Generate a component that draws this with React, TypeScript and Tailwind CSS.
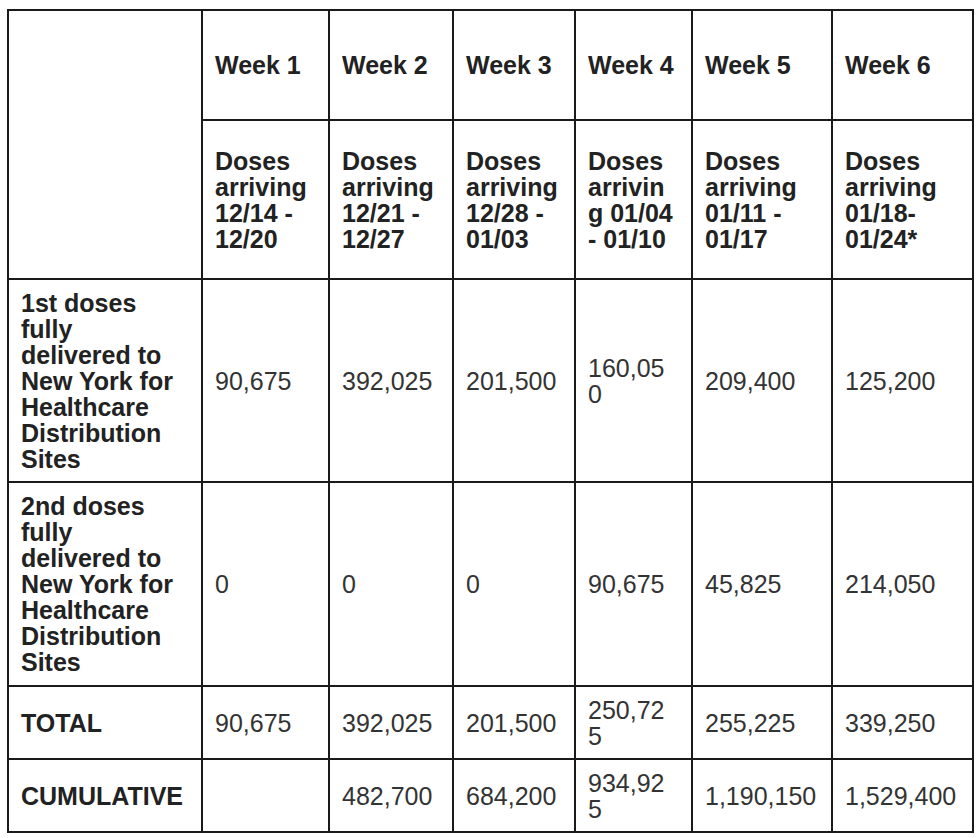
const weeks = ["Week 1", "Week 2", "Week 3", "Week 4", "Week 5", "Week 6"];

const arriving: string[][] = [
  ["Doses", "arriving", "12/14 -", "12/20"],
  ["Doses", "arriving", "12/21 -", "12/27"],
  ["Doses", "arriving", "12/28 -", "01/03"],
  ["Doses", "arrivin", "g 01/04", "- 01/10"],
  ["Doses", "arriving", "01/11 -", "01/17"],
  ["Doses", "arriving", "01/18-", "01/24*"],
];

const deliveredLabel = (n: string) => [
  `${n} doses`,
  "fully",
  "delivered to",
  "New York for",
  "Healthcare",
  "Distribution",
  "Sites",
];

const rows: { label: string[]; h: string; values: string[][] }[] = [
  {
    label: deliveredLabel("1st"),
    h: "h-[203px]",
    values: [["90,675"], ["392,025"], ["201,500"], ["160,05", "0"], ["209,400"], ["125,200"]],
  },
  {
    label: deliveredLabel("2nd"),
    h: "h-[204px]",
    values: [["0"], ["0"], ["0"], ["90,675"], ["45,825"], ["214,050"]],
  },
  {
    label: ["TOTAL"],
    h: "h-[73px]",
    values: [["90,675"], ["392,025"], ["201,500"], ["250,72", "5"], ["255,225"], ["339,250"]],
  },
  {
    label: ["CUMULATIVE"],
    h: "h-[73px]",
    values: [[""], ["482,700"], ["684,200"], ["934,92", "5"], ["1,190,150"], ["1,529,400"]],
  },
];

const cell = "border-2 border-[#1a1a1a] pl-[12px] pr-[6px] align-middle text-left whitespace-nowrap";

const Lines = ({ lines }: { lines: string[] }) => (
  <>
    {lines.map((l, i) => (
      <span key={i} className="block">
        {l}
      </span>
    ))}
  </>
);

export default function App() {
  return (
    <div className="bg-white min-h-screen overflow-hidden pl-[7px] pt-[9px] font-['Liberation_Sans',Arial,sans-serif] text-[25px] leading-[26px] text-[#222]">
      <table className="table-fixed border-collapse w-[965px]">
        <colgroup>
          <col className="w-[194px]" />
          <col className="w-[127px]" />
          <col className="w-[124px]" />
          <col className="w-[122px]" />
          <col className="w-[117px]" />
          <col className="w-[140px]" />
          <col className="w-[141px]" />
        </colgroup>
        <tbody>
          <tr className="h-[110px]">
            <td rowSpan={2} className={cell}></td>
            {weeks.map(w => (
              <td key={w} className={`${cell} font-bold`}>
                {w}
              </td>
            ))}
          </tr>
          <tr className="h-[159px]">
            {arriving.map((a, i) => (
              <td key={i} className={`${cell} font-bold`}>
                <Lines lines={a} />
              </td>
            ))}
          </tr>
          {rows.map((r, ri) => (
            <tr key={ri} className={r.h}>
              <td className={`${cell} font-bold`}>
                <Lines lines={r.label} />
              </td>
              {r.values.map((v, vi) => (
                <td key={vi} className={`${cell} text-[#333]`}>
                  <Lines lines={v} />
                </td>
              ))}
            </tr>
          ))}
        </tbody>
      </table>
      <p className="pl-[3px] mt-[3px] text-[#333] whitespace-nowrap">
        *These numbers represent 50 percent of the Week 2 allocation. The full Week 2 allocation
      </p>
    </div>
  );
}
